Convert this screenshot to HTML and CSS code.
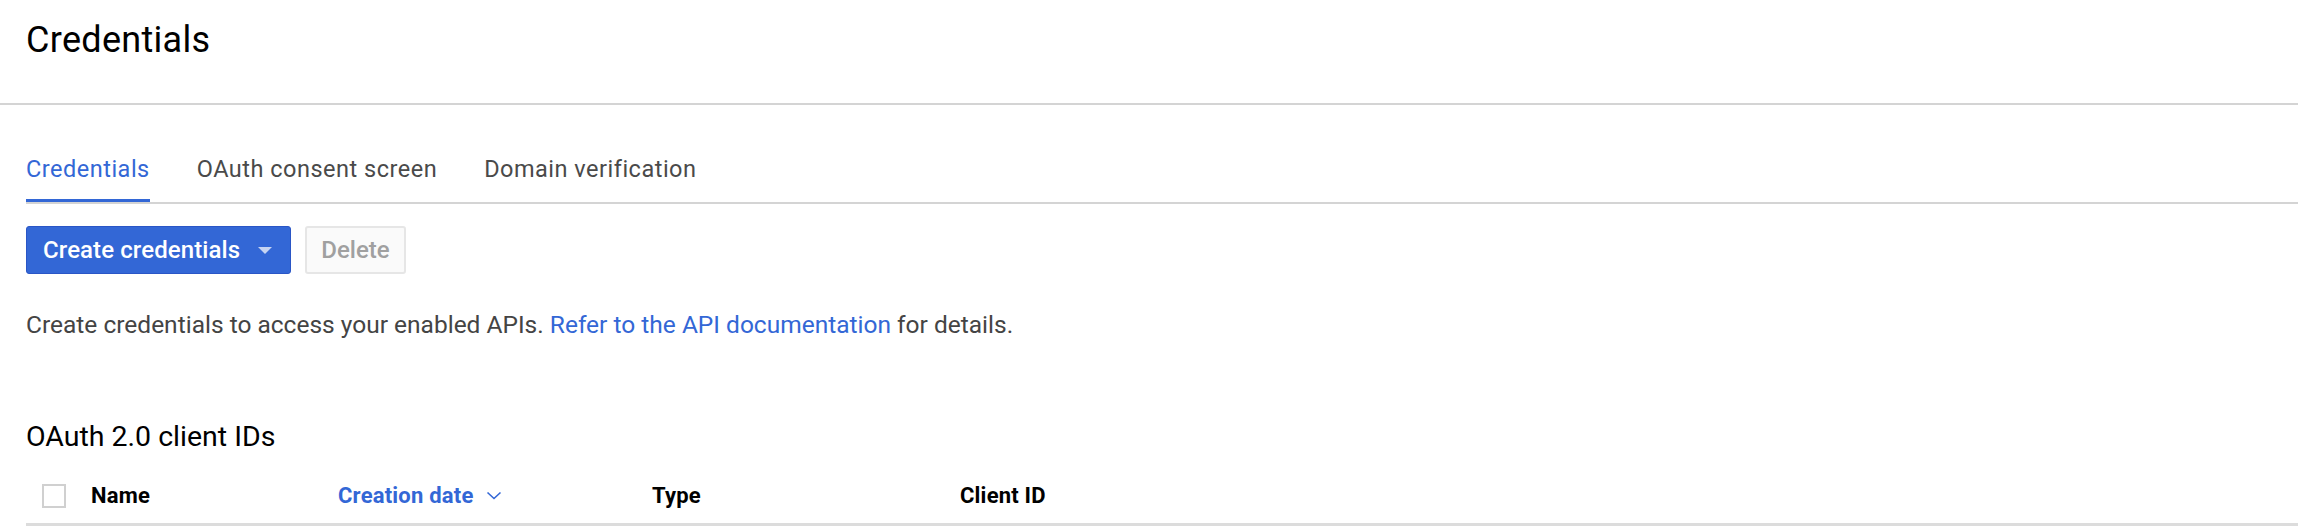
FILE: index.html
```html
<!DOCTYPE html>
<html lang="en">
<head>
<meta charset="utf-8">
<title>Credentials</title>
<link rel="stylesheet" href="styles.css">
</head>
<body>
<header class="page-header">
  <h1 class="page-title">Credentials</h1>
</header>
<main class="content">
  <nav class="tabs">
    <a class="tab tab-active">Credentials</a>
    <a class="tab">OAuth consent screen</a>
    <a class="tab">Domain verification</a>
  </nav>
  <div class="actions">
    <button class="btn btn-primary">Create credentials<span class="caret"></span></button>
    <button class="btn btn-disabled">Delete</button>
  </div>
  <p class="intro">Create credentials to access your enabled APIs. <a class="link">Refer to the API documentation</a> for details.</p>
  <h2 class="section-title">OAuth 2.0 client IDs</h2>
  <div class="table-head">
    <div class="cell cell-check"><span class="checkbox"></span></div>
    <div class="cell">Name</div>
    <div class="cell cell-sort">Creation date
      <svg class="chev" width="16" height="9" viewBox="0 0 16 9"><path d="M1.5 1.5 L8 7.5 L14.5 1.5" fill="none" stroke="#3367d6" stroke-width="1.6"/></svg>
    </div>
    <div class="cell">Type</div>
    <div class="cell">Client ID</div>
  </div>
</main>
</body>
</html>
```

FILE: styles.css
```css
* { box-sizing: border-box; }
body {
  margin: 0;
  font-family: Roboto, "Liberation Sans", sans-serif;
  background: #fff;
  color: #212121;
}
.page-header {
  height: 105px;
  padding: 19px 26px 0;
  border-bottom: 2px solid #d4d4d4;
}
.page-title {
  margin: 0;
  font-size: 36px;
  font-weight: 400;
  line-height: 42px;
  letter-spacing: 0.3px;
  color: #000;
}
.content {
  padding: 50px 0 0 26px;
}
.tabs {
  display: flex;
  gap: 47px;
  border-bottom: 2px solid #d4d4d4;
}
.tab {
  font-size: 23.5px;
  line-height: 28px;
  letter-spacing: 0.5px;
  padding-bottom: 16px;
  border-bottom: 3px solid transparent;
  color: #4a4a4a;
}
.tab-active {
  color: #3367d6;
  border-bottom-color: #3367d6;
}
.actions {
  display: flex;
  gap: 14px;
  margin-top: 22px;
}
.btn {
  height: 48px;
  font-family: Roboto, "Liberation Sans", sans-serif;
  font-size: 24px;
  border-radius: 3px;
  display: flex;
  align-items: center;
}
.btn-primary {
  background: #3367d6;
  border: 1px solid #2a56c6;
  color: #fff;
  font-weight: 500;
  padding: 0 18px 0 16px;
  letter-spacing: 0.1px;
}
.caret {
  width: 0;
  height: 0;
  margin-left: 18px;
  border-left: 7.5px solid transparent;
  border-right: 7.5px solid transparent;
  border-top: 7px solid #c6d4f2;
}
.btn-disabled {
  background: #fafafa;
  border: 2px solid #e6e6e6;
  color: #a0a0a0;
  font-weight: 500;
  padding: 0 14px;
}
.intro {
  margin: 36px 0 0;
  font-size: 24.5px;
  line-height: 29px;
  color: #444;
}
.link { color: #3367d6; }
.section-title {
  margin: 81px 0 0;
  font-size: 28.5px;
  font-weight: 400;
  line-height: 33px;
  color: #000;
}
.table-head {
  margin-top: 17px;
  display: grid;
  grid-template-columns: 65px 247px 314px 308px 1fr;
  align-items: center;
  padding: 14px 0 15px;
  border-bottom: 3px solid #dcdcdc;
  font-size: 22px;
  line-height: 24px;
  font-weight: 700;
  letter-spacing: 0.2px;
  color: #000;
}
.cell-check { padding-left: 16px; display: flex; }
.checkbox {
  width: 24px;
  height: 24px;
  border: 2px solid #d0d0d0;
  display: block;
}
.cell-sort {
  color: #3367d6;
  display: flex;
  align-items: center;
  gap: 13px;
}
.chev { display: block; margin-top: -2px; }
```
